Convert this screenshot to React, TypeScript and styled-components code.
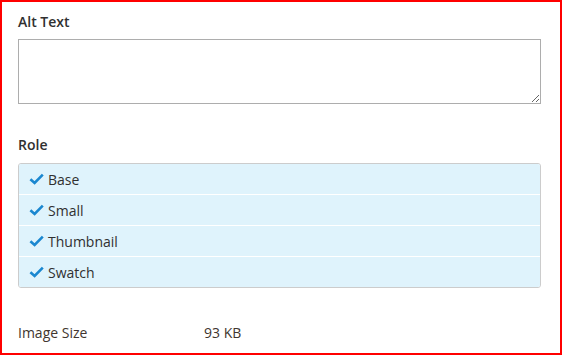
import React from "react";
import styled, { createGlobalStyle } from "styled-components";

const Global = createGlobalStyle`
  html, body { margin: 0; padding: 0; background: #fff; }
  body { font-family: "Open Sans", "Liberation Sans", sans-serif; color: #303030; }
  * { box-sizing: border-box; }
`;

const Frame = styled.div`
  width: 562px;
  height: 355px;
  border: 2px solid #ff0000;
  padding: 10px 19px 0 16px;
  display: flex;
  flex-direction: column;
`;

const Field = styled.div<{ $gap?: number }>`
  display: flex;
  flex-direction: column;
  margin-bottom: ${(p) => p.$gap ?? 0}px;
`;

const Label = styled.label<{ $space?: number }>`
  font-size: 14px;
  font-weight: 600;
  line-height: 20px;
  color: #303030;
  margin-bottom: ${(p) => p.$space ?? 7}px;
`;

const TextArea = styled.textarea`
  width: 523px;
  height: 65px;
  border: 1px solid #adadad;
  border-radius: 0;
  padding: 6px 10px;
  font-family: inherit;
  font-size: 14px;
  resize: both;
  outline: none;
  display: block;
`;

const RoleList = styled.ul`
  list-style: none;
  margin: 0;
  padding: 0;
  width: 523px;
  border: 1px solid #cccccc;
  border-radius: 3px;
  background: #ffffff;
  overflow: hidden;
`;

const RoleItem = styled.li`
  height: 30px;
  background: #dff3fc;
  display: flex;
  align-items: center;
  padding-left: 10px;
  gap: 4px;
  font-size: 14px;
  color: #303030;
  & + & {
    margin-top: 1px;
  }
`;

const Check = styled.svg`
  width: 15px;
  height: 14px;
  flex: none;
`;

const InfoRow = styled.div`
  display: grid;
  grid-template-columns: 186px 1fr;
  font-size: 14px;
  line-height: 20px;
  color: #41362f;
`;

const CheckIcon = () => (
  <Check viewBox="0 0 15 14">
    <path d="M1.4 7.2 L5.6 11 L13.8 2.6" fill="none" stroke="#1a87d0" strokeWidth="2.6" strokeLinecap="butt" strokeLinejoin="miter" />
  </Check>
);

const roles = ["Base", "Small", "Thumbnail", "Swatch"];

export default function App() {
  return (
    <>
      <Global />
      <Frame>
        <Field $gap={31}>
          <Label>Alt Text</Label>
          <TextArea />
        </Field>
        <Field $gap={35}>
          <Label $space={8}>Role</Label>
          <RoleList>
            {roles.map((r) => (
              <RoleItem key={r}>
                <CheckIcon />
                {r}
              </RoleItem>
            ))}
          </RoleList>
        </Field>
        <InfoRow>
          <span>Image Size</span>
          <span>93 KB</span>
        </InfoRow>
      </Frame>
    </>
  );
}
